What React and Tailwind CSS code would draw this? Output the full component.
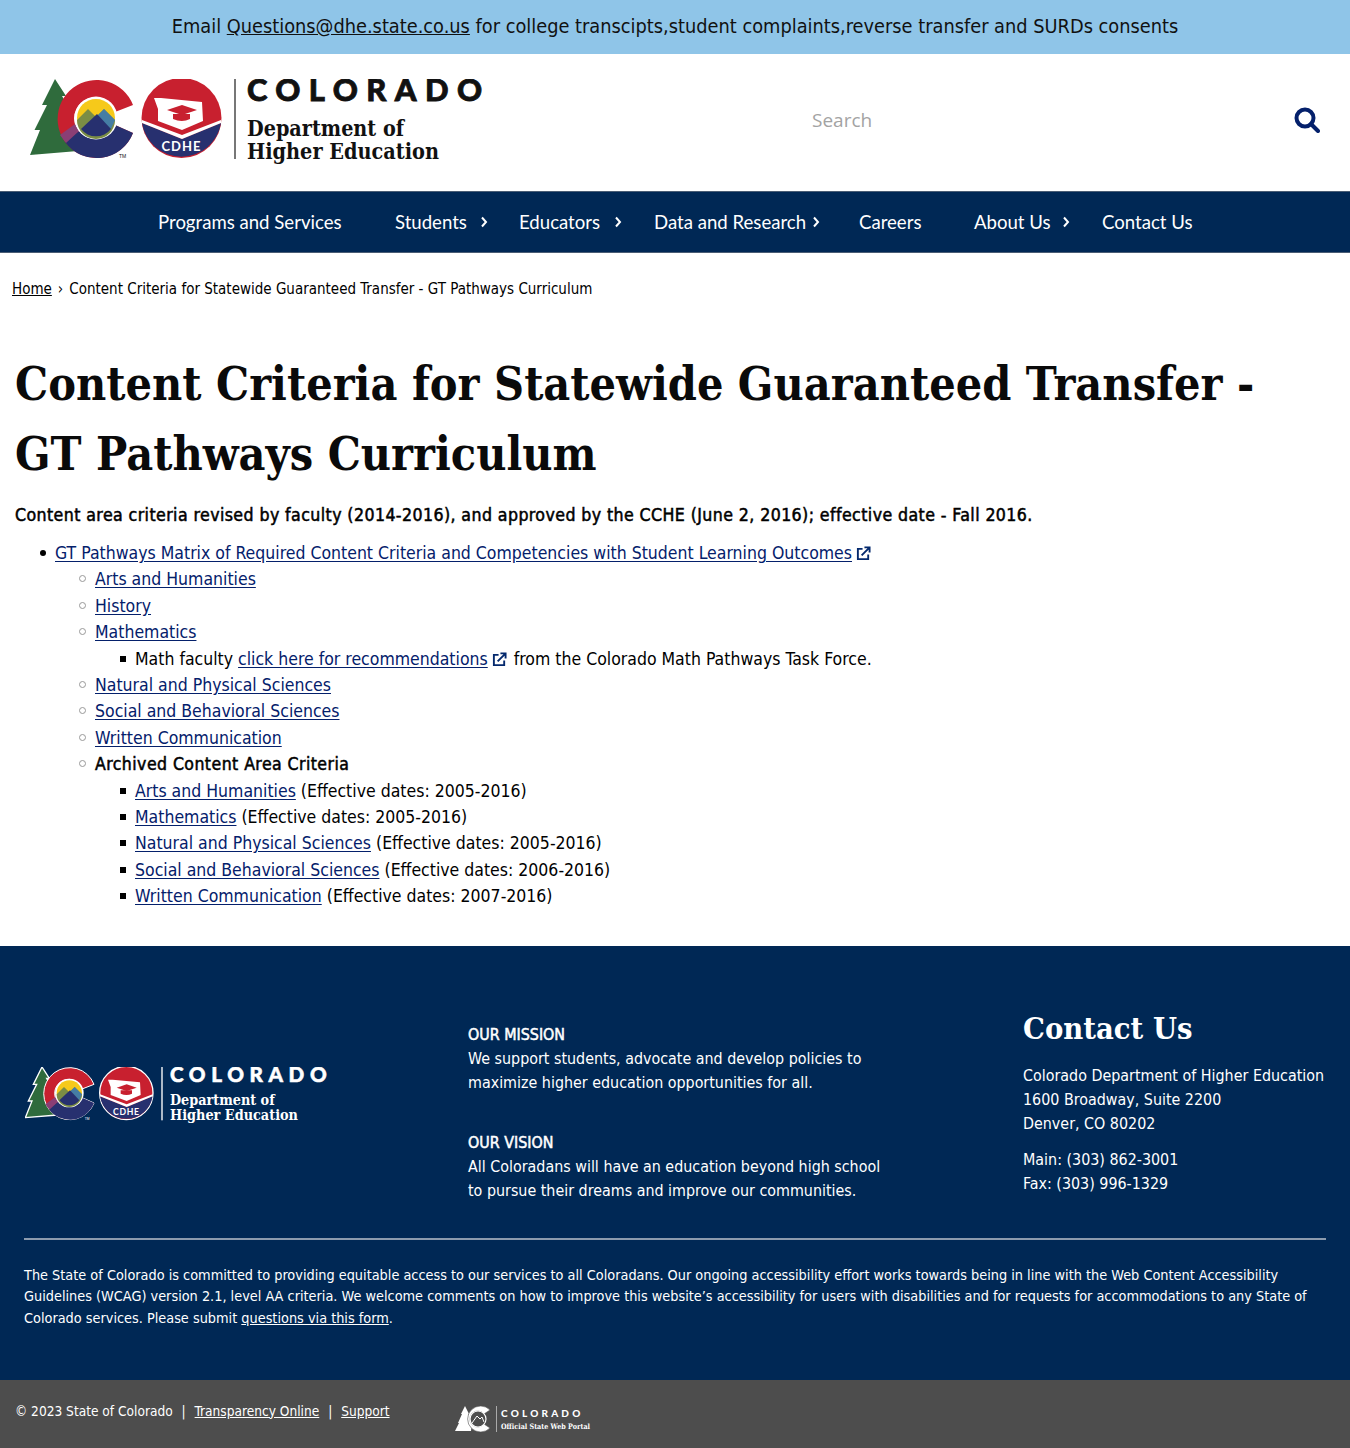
const serifC = "DejaVu Serif Condensed";

function Logo({ footer, className }) {
  const ink = footer ? "#ffffff" : "#111111";
  const stroke = footer ? "#ffffff" : "none";
  return (
    <svg viewBox="0 0 470 90" className={className}>
      <path d="M25 0 L36 17 L32 17 L42 34 L50 70 L48 72 L0 76 L10 51 L4.5 51 L17 26 L12 26 Z" fill="#2f6b3c" stroke={stroke} strokeWidth={footer ? 2 : 0} />
      <path d="M103 26 A39 39 0 1 0 103 54 L85 46 A21 21 0 1 1 85 33 Z" fill="#c8202f" stroke={stroke} strokeWidth={footer ? 1.5 : 0} />
      <path d="M35 63 A39 39 0 0 0 103 54 L85 46 A21 21 0 0 1 49 52 Z" fill="#27306f" />
      <path d="M30 56 L45 45 L49 52 L36 64 Z" fill="#8a3f75" />
      <circle cx="66" cy="39" r="21.5" fill="#ffffff" />
      <circle cx="66" cy="39" r="19" fill="#f6c91a" />
      <path d="M47 41 L58 30 L66 38 L74 30 L85 41 A19 19 0 0 1 47 41 Z" fill="#7b8d45" />
      <path d="M66 38 L74 30 L85 41 L81 50 Z" fill="#457da4" />
      <path d="M51 50 L67 35 L81 50 A19 19 0 0 1 51 50 Z" fill="#27306f" />
      <text x="89" y="79" fontSize="5" fontFamily="Liberation Sans" fill={ink}>TM</text>
      <circle cx="151.5" cy="39" r="40" fill="#c8202f" stroke={stroke} strokeWidth={footer ? 2 : 0} />
      <path d="M112 44 L152 60 L191 44 A40 40 0 0 1 112 44 Z" fill="#27306f" />
      <path d="M112 41 L152 56 L191 41 L191 44 L152 60 L112 44 Z" fill="#ffffff" />
      <path d="M124 19 L131 19 L172 23 L173 42 L152 51 L128 42 L128 30 Z" fill="#ffffff" />
      <path d="M152 26 L167 31 L152 36 L137 31 Z" fill="#c8202f" />
      <path d="M143 35 L160 35 L160 40 Q152 44 143 40 Z" fill="#c8202f" />
      <text x="151.5" y="72" textAnchor="middle" fontSize="13" fontWeight="700" letterSpacing="1" fontFamily="Lato" fill="#ffffff">CDHE</text>
      <rect x="204" y="0" width="2" height="80" fill={footer ? "#ffffff" : "#777777"} />
      <text x="217" y="22" fontSize="31" fontWeight="900" letterSpacing="8.4" fontFamily="Lato" fill={ink} stroke={ink} strokeWidth="0.8">COLORADO</text>
      <text x="217" y="57" fontSize="22" fontWeight="700" fontFamily={serifC} textLength="157" lengthAdjust="spacingAndGlyphs" fill={ink}>Department of</text>
      <text x="217" y="80" fontSize="22" fontWeight="700" fontFamily={serifC} textLength="192" lengthAdjust="spacingAndGlyphs" fill={ink}>Higher Education</text>
    </svg>
  );
}

function PortalLogo() {
  return (
    <svg viewBox="0 0 140 30" className="w-[140px] h-[30px]">
      <path d="M10 2 L14 10 L13 10 L17 18 L16 27 L0 27 L4 19 L3 19 L7 10 L6 10 Z" fill="#ffffff" />
      <path d="M35 6 A13 13 0 1 0 35 24 L29 20 A8 8 0 1 1 29 10 Z" fill="#ffffff" stroke="#4d4d4d" strokeWidth="0.6" />
      <circle cx="23" cy="15" r="8" fill="#4d4d4d" stroke="#ffffff" strokeWidth="1.2" />
      <path d="M17 19 L22 12 L25 15 L27 13 L29 18" fill="none" stroke="#ffffff" />
      <rect x="41" y="2" width="1" height="26" fill="#aaaaaa" />
      <text x="46" y="13" fontSize="10" fontWeight="900" letterSpacing="3.2" fontFamily="Lato" fill="#ffffff">COLORADO</text>
      <text x="46" y="25" fontSize="7.4" fontWeight="700" fontFamily="DejaVu Serif" textLength="89" lengthAdjust="spacingAndGlyphs" fill="#ffffff">Official State Web Portal</text>
    </svg>
  );
}

function Ext() {
  return (
    <svg viewBox="0 0 16 16" className="inline-block w-[15px] h-[15px] ml-[4px] mr-[2px] align-[-2px]" fill="none" stroke="#04296d" strokeWidth="2">
      <path d="M7 3 H2 V14 H13 V9" />
      <path d="M6 10 L14 2 M9 1.5 H14.5 V7" />
    </svg>
  );
}

function A({ children }) {
  return <a href="#" className="text-[#04206b] underline underline-offset-2">{children}</a>;
}

function NavItem({ label, arrow, w, mr }) {
  return (
    <div className={`flex items-center ${w}`}>
      <span>{label}</span>
      {arrow && (
        <svg viewBox="0 0 8 12" className={`w-[8px] h-[12px] ml-auto ${mr}`} fill="none" stroke="#fff" strokeWidth="2">
          <path d="M2 1.5 L6 6 L2 10.5" />
        </svg>
      )}
    </div>
  );
}

function Li1({ children }) {
  return <li className="relative list-none before:absolute before:left-[-16px] before:top-[9px] before:w-[7px] before:h-[7px] before:rounded-full before:border before:border-[#999]">{children}</li>;
}
function Li2({ children }) {
  return <li className="relative list-none before:absolute before:left-[-15px] before:top-[10px] before:w-[6px] before:h-[6px] before:bg-black">{children}</li>;
}

const fauxBold = "font-normal [-webkit-text-stroke:0.5px_currentColor]";

export default function App() {
  return (
    <div className="bg-white text-black w-[1350px] font-['DejaVu_Sans_Condensed','DejaVu_Sans',sans-serif]">
      <div className="h-[54px] bg-[#8fc5e8] flex items-center justify-center text-[19.8px] text-[#111]">
        <span>Email <a href="#" className="underline">Questions@dhe.state.co.us</a> for college transcipts,student complaints,reverse transfer and SURDs consents</span>
      </div>

      <header className="h-[137px] flex items-center pl-[30px] pr-[30px] pb-[5px]">
        <Logo className="w-[470px] h-[90px] mt-[8px] shrink-0" />
        <div className="ml-[312px] text-[19px] text-[#a3a3a3] font-['Open_Sans',sans-serif]">Search</div>
        <svg viewBox="0 0 26 26" className="ml-auto w-[26px] h-[26px]" fill="none" stroke="#04206b" strokeWidth="4">
          <circle cx="11" cy="11" r="8.5" />
          <path d="M17 17 L24 24" strokeLinecap="round" />
        </svg>
      </header>

      <nav className="h-[62px] bg-[#002855] border-y border-[#4a5d74]">
        <div className="mx-auto w-[1090px] h-full pl-[28px] pt-[1px] flex items-center text-white text-[18.6px] font-[Lato,sans-serif]">
          <NavItem label="Programs and Services" w="w-[237px]" />
          <NavItem label="Students" arrow w="w-[124px]" mr="mr-[31px]" />
          <NavItem label="Educators" arrow w="w-[135px]" mr="mr-[32px]" />
          <NavItem label="Data and Research" arrow w="w-[205px]" mr="mr-[39px]" />
          <NavItem label="Careers" w="w-[115px]" />
          <NavItem label="About Us" arrow w="w-[128px]" mr="mr-[32px]" />
          <NavItem label="Contact Us" w="w-[100px]" />
        </div>
      </nav>

      <div className="pl-[12px] pt-[27px] text-[15px] leading-[18px]">
        <a href="#" className="underline">Home</a>
        <span className="mx-[6px]">›</span>
        Content Criteria for Statewide Guaranteed Transfer - GT Pathways Curriculum
      </div>

      <main className="px-[15px] pt-[51px] pb-[36px]">
        <h1 className="text-[46.3px] leading-[70px] max-w-[1260px] font-bold text-[#0a0a0a] font-['DejaVu_Serif_Condensed','DejaVu_Serif',serif]">
          Content Criteria for Statewide Guaranteed Transfer - GT Pathways Curriculum
        </h1>
        <p className={`mt-[13px] text-[17.6px] leading-[26px] tracking-[0.41px] ${fauxBold}`}>
          Content area criteria revised by faculty (2014-2016), and approved by the CCHE (June 2, 2016); effective date - Fall 2016.
        </p>
        <ul className="mt-[12px] pl-[40px] list-none text-[17.5px] leading-[26.4px]">
          <li className="relative before:absolute before:left-[-15px] before:top-[10px] before:w-[6px] before:h-[6px] before:rounded-full before:bg-black">
            <A>GT Pathways Matrix of Required Content Criteria and Competencies with Student Learning Outcomes</A><Ext />
            <ul className="pl-[40px]">
              <Li1><A>Arts and Humanities</A></Li1>
              <Li1><A>History</A></Li1>
              <Li1>
                <A>Mathematics</A>
                <ul className="pl-[40px]">
                  <Li2>Math faculty <A>click here for recommendations</A><Ext /> from the Colorado Math Pathways Task Force.</Li2>
                </ul>
              </Li1>
              <Li1><A>Natural and Physical Sciences</A></Li1>
              <Li1><A>Social and Behavioral Sciences</A></Li1>
              <Li1><A>Written Communication</A></Li1>
              <Li1>
                <span className={`tracking-[0.45px] ${fauxBold}`}>Archived Content Area Criteria</span>
                <ul className="pl-[40px]">
                  <Li2><A>Arts and Humanities</A> (Effective dates: 2005-2016)</Li2>
                  <Li2><A>Mathematics</A> (Effective dates: 2005-2016)</Li2>
                  <Li2><A>Natural and Physical Sciences</A> (Effective dates: 2005-2016)</Li2>
                  <Li2><A>Social and Behavioral Sciences</A> (Effective dates: 2006-2016)</Li2>
                  <Li2><A>Written Communication</A> (Effective dates: 2007-2016)</Li2>
                </ul>
              </Li1>
            </ul>
          </li>
        </ul>
      </main>

      <footer className="bg-[#002855] text-white h-[434px] px-[24px] pt-[64px] text-[15.9px] leading-[24px]">
        <div className="flex h-[229px] -mb-[1px]">
          <div className="w-[444px] pl-[1px] pt-[57px]">
            <Logo footer className="w-[314px] h-[60px]" />
          </div>
          <div className="w-[555px] pt-[13px]">
            <p className={fauxBold}>OUR MISSION</p>
            <p>We support students, advocate and develop policies to<br />maximize higher education opportunities for all.</p>
            <p className={`${fauxBold} mt-[36px]`}>OUR VISION</p>
            <p>All Coloradans will have an education beyond high school<br />to pursue their dreams and improve our communities.</p>
          </div>
          <div className="whitespace-nowrap">
            <h2 className="text-[30.6px] leading-[36px] font-bold font-['DejaVu_Serif_Condensed','DejaVu_Serif',serif]">Contact Us</h2>
            <p className="mt-[18px]">Colorado Department of Higher Education<br />1600 Broadway, Suite 2200<br />Denver, CO 80202</p>
            <p className="mt-[12px]">Main: (303) 862-3001<br />Fax: (303) 996-1329</p>
          </div>
        </div>
        <div className="border-t-2 border-[#8c9bae] pt-[25px] text-[14.35px] leading-[21.5px]">
          The State of Colorado is committed to providing equitable access to our services to all Coloradans. Our ongoing accessibility effort works towards being in line with the Web Content Accessibility Guidelines (WCAG) version 2.1, level AA criteria. We welcome comments on how to improve this website’s accessibility for users with disabilities and for requests for accommodations to any State of Colorado services. Please submit <a href="#" className="underline">questions via this form</a>.
        </div>
      </footer>

      <div className="h-[68px] bg-[#4d4d4d] text-white text-[13.6px] pl-[15px] flex items-start">
        <div className="pt-[21px] leading-[20px] w-[440px]">
          © 2023 State of Colorado <span className="mx-[5px]">|</span> <a href="#" className="underline">Transparency Online</a> <span className="mx-[5px]">|</span> <a href="#" className="underline">Support</a>
        </div>
        <div className="pt-[24px]"><PortalLogo /></div>
      </div>
    </div>
  );
}
